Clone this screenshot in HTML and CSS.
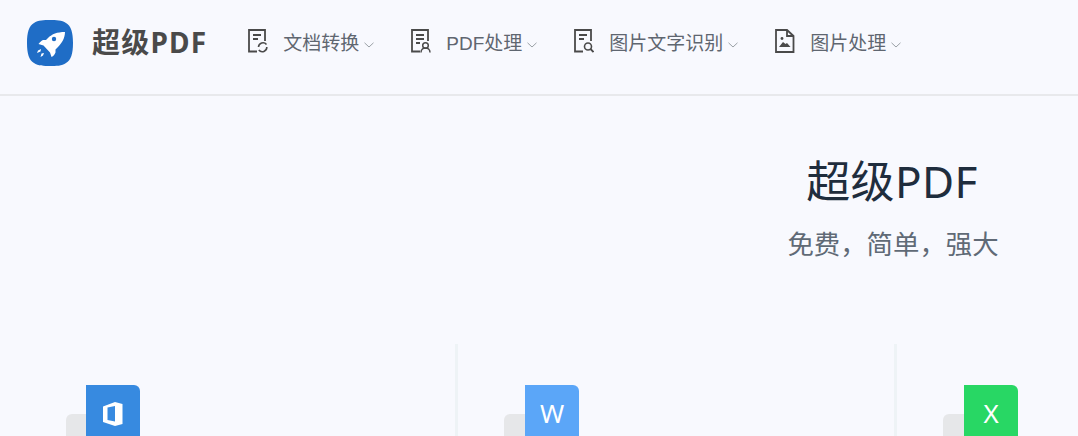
FILE: index.html
```html
<!DOCTYPE html>
<html lang="zh-CN">
<head>
    <meta charset="UTF-8">
    <meta name="viewport" content="width=device-width, initial-scale=1.0">
    <title>超级PDF</title>
    <link rel="stylesheet" href="styles.css">
</head>
<body>
    <div class="page">
        <header class="header">
            <a class="logo" href="#">
                <svg class="logo-icon" viewBox="0 0 46 46">
                    <path d="M23 0c6 0 12 0 16 3 5 3 7 9 7 20s-2 17-7 20c-4 3-10 3-16 3s-12 0-16-3c-5-3-7-9-7-20S2 6 7 3c4-3 10-3 16-3z" fill="#1f6dc6"/>
                    <path d="M38 12c-8 0-13 2-17 6l-2 2h-3c-2 1-3 2-4.500 4l5 1.500 6.500 7 1.500 4.500c2-1 3-2.500 4-4.500v-3l2-2c4-4 7.500-9 7.500-15.500z" fill="#fff"/>
                    <circle cx="27" cy="19" r="2.200" fill="#1f6dc6"/>
                    <path d="M14 29l-3 1.500-1 2.500 3.500-1.500zM17 33l-1 2.500-2.500 1.500 1-3.500z" fill="#fff"/>
                </svg>
                <span class="logo-text">超级PDF</span>
            </a>
            <nav class="nav">
                <a class="nav-item" href="#">
                    <svg class="nav-icon" viewBox="0 0 20 24">
                        <path d="M9 22.500H1V1h16v11M5 6h8M5 10h5" fill="none" stroke="#4a4a4a" stroke-width="1.800"/>
                        <path d="M10.500 18a4.500 4.500 0 0 1 8-2.500M18.800 18a4.500 4.500 0 0 1-8 3" fill="none" stroke="#4a4a4a" stroke-width="1.600"/>
                    </svg>
                    <span>文档转换</span>
                    <svg class="nav-arrow" viewBox="0 0 10 6"><path d="M.5 .8L5 5l4.500-4.200" fill="none" stroke="#9aa0a6"/></svg>
                </a>
                <a class="nav-item" href="#">
                    <svg class="nav-icon" viewBox="0 0 20 24">
                        <path d="M9 22.500H1V1h16v11M5 6h8M5 10h8M5 14h4" fill="none" stroke="#4a4a4a" stroke-width="1.800"/>
                        <circle cx="14.500" cy="16.500" r="2.800" fill="none" stroke="#4a4a4a" stroke-width="1.500"/>
                        <path d="M10 23.500c0-6 9-6 9 0" fill="none" stroke="#4a4a4a" stroke-width="1.500"/>
                    </svg>
                    <span>PDF处理</span>
                    <svg class="nav-arrow" viewBox="0 0 10 6"><path d="M.5 .8L5 5l4.500-4.200" fill="none" stroke="#9aa0a6"/></svg>
                </a>
                <a class="nav-item" href="#">
                    <svg class="nav-icon" viewBox="0 0 20 24">
                        <path d="M9 22.500H1V1h16v11M5 6h8M5 10h5" fill="none" stroke="#4a4a4a" stroke-width="1.800"/>
                        <circle cx="14" cy="17.500" r="3.500" fill="none" stroke="#4a4a4a" stroke-width="1.600"/>
                        <path d="M16.500 20l3 3" stroke="#4a4a4a" stroke-width="1.800"/>
                    </svg>
                    <span>图片文字识别</span>
                    <svg class="nav-arrow" viewBox="0 0 10 6"><path d="M.5 .8L5 5l4.500-4.200" fill="none" stroke="#9aa0a6"/></svg>
                </a>
                <a class="nav-item" href="#">
                    <svg class="nav-icon" viewBox="0 0 20 24">
                        <path d="M1 1h11l6.500 6v16H1zM12 1v6h6.500" fill="none" stroke="#4a4a4a" stroke-width="1.800"/>
                        <circle cx="7" cy="9.500" r="1.400" fill="#4a4a4a"/>
                        <path d="M4 18l4-5 2.500 2 1.500-1 3.500 4z" fill="#4a4a4a"/>
                    </svg>
                    <span>图片处理</span>
                    <svg class="nav-arrow" viewBox="0 0 10 6"><path d="M.5 .8L5 5l4.500-4.200" fill="none" stroke="#9aa0a6"/></svg>
                </a>
            </nav>
        </header>

        <section class="hero">
            <h1>超级PDF</h1>
            <p>免费，简单，强大</p>
        </section>

        <section class="cards">
            <div class="card">
                <div class="card-badge">
                    <div class="badge-shadow"></div>
                    <div class="badge badge-office">
                        <svg class="office-icon" viewBox="0 0 20 24">
                            <path d="M0 4.500L12 0l7.500 2v20L12 24 0 20zM12 4L4.500 5.500v12.500L12 19.500z" fill="#fff" fill-rule="evenodd"/>
                        </svg>
                    </div>
                </div>
            </div>
            <div class="card card-line">
                <div class="card-badge">
                    <div class="badge-shadow"></div>
                    <div class="badge badge-word">W</div>
                </div>
            </div>
            <div class="card card-line">
                <div class="card-badge">
                    <div class="badge-shadow"></div>
                    <div class="badge badge-excel">X</div>
                </div>
            </div>
        </section>
    </div>
</body>
</html>
```

FILE: styles.css
```css
html, body {
    margin: 0;
    height: 436px;
    overflow: hidden;
}
body {
    font-family: 'Noto Sans', 'Noto Sans CJK SC', sans-serif;
    background-color: #f8f9fe;
}
a {
    text-decoration: none;
}
.page {
    width: 1078px;
}
.header {
    display: flex;
    align-items: center;
    height: 96px;
    padding: 0 0 8px 27px;
    box-sizing: border-box;
    border-bottom: 2px solid #e8e9ec;
}
.logo {
    display: flex;
    align-items: center;
    gap: 19px;
}
.logo-icon {
    width: 46px;
    height: 46px;
}
.logo-text {
    margin-bottom: 4px;
    font-size: 28px;
    font-weight: 700;
    color: #4a4a4a;
    letter-spacing: 1.200px;
}
.nav {
    display: flex;
    margin: 0 0 4px 41px;
    gap: 37px;
}
.nav-item {
    display: flex;
    align-items: center;
    font-family: 'Liberation Sans', 'Noto Sans CJK SC', sans-serif;
    font-size: 19px;
    color: #5f6670;
}
.nav-icon {
    width: 20px;
    height: 24px;
    margin-right: 15px;
}
.nav-arrow {
    width: 10px;
    height: 6px;
    margin-left: 5px;
    margin-top: 7px;
}
.hero {
    padding: 55px 0 0 708px;
    text-align: center;
}
.hero h1 {
    margin: 0;
    padding-right: 2px;
    font-size: 44px;
    font-weight: 400;
    line-height: 60px;
    letter-spacing: .4px;
    color: #1f2d3d;
}
.hero p {
    margin: 15px 0 0;
    font-size: 26.400px;
    line-height: 36px;
    color: #606a76;
}
.cards {
    display: grid;
    grid-template-columns: 439px 439px 1fr;
    margin-top: 82px;
    padding-left: 16px;
}
.card {
    height: 92px;
    padding: 41px 0 0 50px;
    box-sizing: border-box;
}
.card-line {
    border-left: 3px solid #eef3f6;
    padding-left: 46px;
}
.card-line .badge-shadow {
    margin-right: -19px;
}
.card-badge {
    display: flex;
    align-items: flex-start;
}
.badge-shadow {
    width: 40px;
    height: 40px;
    margin-top: 29px;
    margin-right: -20px;
    border-radius: 6px 0 0 0;
    background: #e6e7e9;
}
.badge {
    position: relative;
    display: flex;
    justify-content: center;
    width: 54px;
    height: 60px;
    padding-top: 14px;
    box-sizing: border-box;
    border-radius: 0 6px 0 0;
    font-size: 26px;
    line-height: 28px;
    color: #fff;
}
.badge-office {
    background: #378ae0;
}
.badge-word {
    background: #5ba6f8;
}
.badge-excel {
    background: #28d764;
}
.office-icon {
    width: 20px;
    height: 24px;
    margin-top: 3px;
}
```
